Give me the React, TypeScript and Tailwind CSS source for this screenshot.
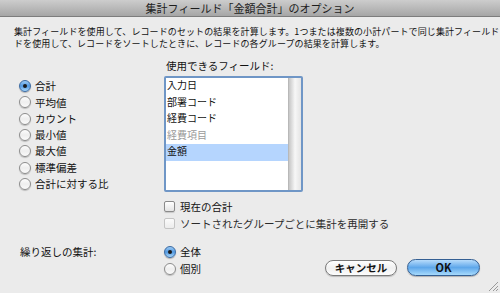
import React from 'react';

function Radio({ checked }: { checked?: boolean }) {
  if (checked) {
    return (
      <span className="w-[12px] h-[12px] rounded-full border border-[#3a6aa3] bg-linear-to-b from-[#9ccbf5] via-[#4f97df] to-[#a9d8fb] flex items-center justify-center shrink-0 shadow-[0_1px_1px_rgba(0,0,0,0.25)]">
        <span className="w-[4px] h-[4px] rounded-full bg-[#1a1a1a]" />
      </span>
    );
  }
  return (
    <span className="w-[12px] h-[12px] rounded-full border border-[#8c8c8c] bg-linear-to-b from-[#fdfdfd] via-[#eeeeee] to-[#fafafa] shrink-0 shadow-[0_1px_1px_rgba(0,0,0,0.2)]" />
  );
}

function Checkbox({ disabled }: { disabled?: boolean }) {
  return (
    <span
      className={
        disabled
          ? 'w-[11px] h-[11px] rounded-[2px] border border-[#c4c4c4] bg-linear-to-b from-[#fbfbfb] to-[#ececec] shrink-0'
          : 'w-[11px] h-[11px] rounded-[2px] border border-[#8a8a8a] bg-linear-to-b from-[#ffffff] to-[#e4e4e4] shrink-0 shadow-[0_1px_1px_rgba(0,0,0,0.15)]'
      }
    />
  );
}

export default function App() {
  const summaries = ['合計', '平均値', 'カウント', '最小値', '最大値', '標準偏差', '合計に対する比'];
  const fields = [
    { name: '入力日' },
    { name: '部署コード' },
    { name: '経費コード' },
    { name: '経費項目', dim: true },
    { name: '金額', selected: true },
  ];

  return (
    <div
      className="w-[500px] h-[293px] bg-[#ebebeb] text-[#111] overflow-hidden relative"
      style={{ fontFamily: '"Noto Sans CJK JP", "Noto Sans", sans-serif' }}
    >
      {/* Title bar */}
      <div className="h-[17px] bg-linear-to-b from-[#cdcdcd] to-[#a6a6a6] border-b border-[#7d7d7d] flex items-center justify-center text-[11px] leading-[17px] text-[#1d1d1d]">
        集計フィールド「金額合計」のオプション
      </div>

      {/* Description */}
      <p className="pl-[14px] pt-[9px] text-[9px] leading-[12px] tracking-[0.1px] whitespace-nowrap">
        集計フィールドを使用して、レコードのセットの結果を計算します。1つまたは複数の小計パートで同じ集計フィールド
        <br />
        ドを使用して、レコードをソートしたときに、レコードの各グループの結果を計算します。
      </p>

      {/* Main */}
      <div className="flex mt-[9px]">
        <div className="w-[164px] pl-[19px] pt-[19px] flex flex-col">
          {summaries.map((s, i) => (
            <div key={s} className="h-[16.3px] flex items-center gap-[4px] text-[10.5px]">
              <Radio checked={i === 0} />
              <span>{s}</span>
            </div>
          ))}
        </div>

        <div className="flex flex-col">
          <div className="h-[14px] leading-[14px] text-[10.5px] pl-[2px]">使用できるフィールド:</div>
          <div className="mt-[3px] w-[139px] h-[116px] border-2 border-[#6f96c6] rounded-[2px] bg-white flex overflow-hidden">
            <div className="flex-1 flex flex-col">
              {fields.map((f) => (
                <div
                  key={f.name}
                  className={
                    'h-[16.6px] leading-[14px] text-[10px] pl-[1px] ' +
                    (f.selected ? 'bg-[#b5d5fe] ' : '') +
                    (f.dim ? 'text-[#9a9a9a]' : 'text-[#111]')
                  }
                >
                  {f.name}
                </div>
              ))}
            </div>
            <div className="w-[13px] bg-linear-to-r from-[#c6c6c6] via-[#f7f7f7] to-[#e4e4e4] border-l border-[#b8b8b8]" />
          </div>

          <div className="mt-[6px] h-[17px] flex items-center gap-[5px] text-[10.5px]">
            <Checkbox />
            <span>現在の合計</span>
          </div>
          <div className="h-[17px] flex items-center gap-[5px] text-[10.5px] whitespace-nowrap">
            <Checkbox disabled />
            <span className="text-[#2a2a2a]">ソートされたグループごとに集計を再開する</span>
          </div>
        </div>
      </div>

      {/* Bottom row */}
      <div className="flex mt-[11px]">
        <div className="w-[164px] pl-[20px] h-[17px] leading-[17px] text-[10.5px]">繰り返しの集計:</div>
        <div className="flex flex-col">
          <div className="h-[17px] flex items-center gap-[4px] text-[10.5px]">
            <Radio checked />
            <span>全体</span>
          </div>
          <div className="h-[17px] flex items-center gap-[4px] text-[10.5px]">
            <Radio />
            <span>個別</span>
          </div>
        </div>
        <div className="ml-auto pr-[20px] pt-[15px] flex items-center gap-[10px]">
          <button className="w-[72px] h-[16px] rounded-full border border-[#7a7a7a] bg-linear-to-b from-[#ffffff] via-[#f0f0f0] to-[#fdfdfd] text-[10.5px] font-bold leading-[14px] shadow-[0_1px_1px_rgba(0,0,0,0.2)]">
            キャンセル
          </button>
          <button className="w-[73px] h-[17px] rounded-full border border-[#345f93] bg-linear-to-b from-[#b7dcfb] via-[#5ea7ea] to-[#a6dafc] text-[11px] font-bold leading-[15px] shadow-[0_1px_1px_rgba(0,0,0,0.25)]">
            OK
          </button>
        </div>
      </div>

      {/* Resize grip */}
      <svg className="absolute right-[1px] bottom-[1px]" width="11" height="11" viewBox="0 0 11 11">
        <line x1="10" y1="1" x2="1" y2="10" stroke="#9a9a9a" strokeWidth="1" />
        <line x1="10" y1="5" x2="5" y2="10" stroke="#9a9a9a" strokeWidth="1" />
        <line x1="10" y1="8" x2="8" y2="10" stroke="#9a9a9a" strokeWidth="1" />
      </svg>
    </div>
  );
}
